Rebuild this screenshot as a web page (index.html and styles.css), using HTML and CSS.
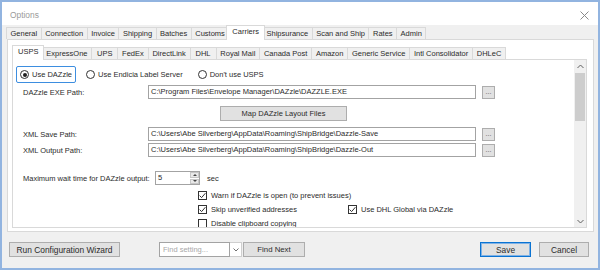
FILE: index.html
```html
<!DOCTYPE html>
<html lang="en">
<head>
  <meta charset="UTF-8" />
  <title>Options</title>
  <link rel="stylesheet" href="styles.css">
</head>
<body>
  <div class="window">
    <div class="titlebar">
      <span class="title">Options</span>
      <svg class="close" width="9" height="9" viewBox="0 0 9 9"><path d="M0.5 0.5L8.5 8.5M8.5 0.5L0.5 8.5" stroke="#8a8a8a" stroke-width="1" fill="none"/></svg>
    </div>

    <div class="tabstrip main-tabs">
      <span class="tab">General</span>
      <span class="tab">Connection</span>
      <span class="tab">Invoice</span>
      <span class="tab">Shipping</span>
      <span class="tab">Batches</span>
      <span class="tab">Customs</span>
      <span class="tab active">Carriers</span>
      <span class="tab">Shipsurance</span>
      <span class="tab">Scan and Ship</span>
      <span class="tab">Rates</span>
      <span class="tab">Admin</span>
    </div>

    <div class="page">
      <div class="tabstrip sub-tabs">
        <span class="tab active">USPS</span>
        <span class="tab">ExpressOne</span>
        <span class="tab">UPS</span>
        <span class="tab">FedEx</span>
        <span class="tab">DirectLink</span>
        <span class="tab">DHL</span>
        <span class="tab">Royal Mail</span>
        <span class="tab">Canada Post</span>
        <span class="tab">Amazon</span>
        <span class="tab">Generic Service</span>
        <span class="tab">Intl Consolidator</span>
        <span class="tab">DHLeC</span>
      </div>

      <div class="subpage">
        <div class="content">
          <div class="radio-row">
            <span class="opt focused"><span class="radio on"></span>Use DAZzle</span>
            <span class="opt"><span class="radio"></span>Use Endicia Label Server</span>
            <span class="opt"><span class="radio"></span>Don't use USPS</span>
          </div>

          <div class="path-row exe-row">
            <span class="lbl">DAZzle EXE Path:</span>
            <span class="field">C:\Program Files\Envelope Manager\DAZzle\DAZZLE.EXE</span>
            <span class="btn dots">...</span>
          </div>

          <div class="map-row">
            <span class="btn map">Map DAZzle Layout Files</span>
          </div>

          <div class="path-row save-row">
            <span class="lbl">XML Save Path:</span>
            <span class="field">C:\Users\Abe Silverberg\AppData\Roaming\ShipBridge\Dazzle-Save</span>
            <span class="btn dots">...</span>
          </div>

          <div class="path-row out-row">
            <span class="lbl">XML Output Path:</span>
            <span class="field">C:\Users\Abe Silverberg\AppData\Roaming\ShipBridge\Dazzle-Out</span>
            <span class="btn dots">...</span>
          </div>

          <div class="wait-row">
            <span class="lbl">Maximum wait time for DAZzle output:</span>
            <span class="spinner">
              <span class="spin-value">5</span>
              <span class="spin-btns">
                <span class="spin-up"></span>
                <span class="spin-down"></span>
              </span>
            </span>
            <span class="unit">sec</span>
          </div>

          <div class="checks">
            <span class="chk"><span class="box on"><svg width="7" height="7" viewBox="0 0 7 7"><path d="M0.6 3.6L2.6 5.6L6.4 1.2" stroke="#333" stroke-width="1" fill="none"/></svg></span>Warn if DAZzle is open (to prevent issues)</span>
            <span></span>
            <span class="chk"><span class="box on"><svg width="7" height="7" viewBox="0 0 7 7"><path d="M0.6 3.6L2.6 5.6L6.4 1.2" stroke="#333" stroke-width="1" fill="none"/></svg></span>Skip unverified addresses</span>
            <span class="chk"><span class="box on"><svg width="7" height="7" viewBox="0 0 7 7"><path d="M0.6 3.6L2.6 5.6L6.4 1.2" stroke="#333" stroke-width="1" fill="none"/></svg></span>Use DHL Global via DAZzle</span>
            <span class="chk last"><span class="box"></span>Disable clipboard copying</span>
          </div>
        </div>

        <div class="scrollbar">
          <span class="arrow"><svg width="7" height="5" viewBox="0 0 7 5"><path d="M0.5 4L3.5 1L6.5 4" stroke="#606060" stroke-width="1" fill="none"/></svg></span>
          <span class="thumb"></span>
          <span class="track"></span>
          <span class="arrow"><svg width="7" height="5" viewBox="0 0 7 5"><path d="M0.5 1L3.5 4L6.5 1" stroke="#606060" stroke-width="1" fill="none"/></svg></span>
        </div>
      </div>
    </div>

    <div class="footer">
      <span class="btn big wizard">Run Configuration Wizard</span>
      <span class="combo">
        <span class="combo-text">Find setting...</span>
        <span class="combo-drop"><svg width="6" height="4" viewBox="0 0 6 4"><path d="M0.5 0.5L3 3L5.5 0.5" stroke="#707070" stroke-width="1" fill="none"/></svg></span>
      </span>
      <span class="btn find">Find Next</span>
      <span class="spacer"></span>
      <span class="btn big save">Save</span>
      <span class="btn big cancel">Cancel</span>
    </div>
  </div>
</body>
</html>
```

FILE: styles.css
```css
:root {
  --window-border: #92b4e0;
  --dialog-bg: #f0f0f0;
  --tab-border: #d9d9d9;
  --field-border: #a3a3a3;
  --button-bg: #e1e1e1;
  --button-border: #adadad;
  --text-color: #2b2b2b;
  --font-family: 'Liberation Sans', Arial, sans-serif;
}

* {
  box-sizing: border-box;
  margin: 0;
  padding: 0;
}

html, body {
  width: 600px;
  height: 270px;
  overflow: hidden;
  background: #fff;
  font-family: var(--font-family);
  font-size: 7.5px;
  color: var(--text-color);
}

.window {
  width: 600px;
  height: 270px;
  border: 2px solid var(--window-border);
  background: var(--dialog-bg);
  display: flex;
  flex-direction: column;
}

/* Title bar */
.titlebar {
  flex: none;
  height: 23px;
  background: #fff;
  display: flex;
  align-items: center;
  justify-content: space-between;
  padding: 3px 9px 0 8px;
}

.title {
  font-size: 8.4px;
  color: #9a9a9a;
}

/* Tabs */
.tabstrip {
  flex: none;
  display: flex;
  align-items: flex-end;
  height: 14px;
  white-space: nowrap;
}

.main-tabs {
  padding-left: 5px;
}

.sub-tabs {
  padding-left: 3px;
}

.tab {
  height: 12px;
  line-height: 11px;
  padding: 0 3.5px;
  border: 1px solid var(--tab-border);
  border-bottom: none;
  margin-left: -1px;
  background: var(--dialog-bg);
}

.sub-tabs .tab {
  min-width: 27px;
  padding: 0 3.8px;
  text-align: center;
}

.tab.active {
  position: relative;
  z-index: 1;
  height: 15px;
  line-height: 12px;
  margin: 0 -2px -1px -3px;
  padding: 0 5px;
  background: #fff;
}

.sub-tabs .tab.active {
  padding: 0 5px;
}

.page {
  flex: none;
  width: 587px;
  height: 193px;
  margin-left: 5px;
  padding: 5px 0 0 4px;
  background: #fff;
  border: 1px solid var(--tab-border);
}

.subpage {
  width: 575px;
  height: 169px;
  border: 1px solid var(--tab-border);
  background: #fff;
  display: flex;
}

.content {
  flex: 1;
  overflow: hidden;
  white-space: nowrap;
}

/* Radio row */
.radio-row {
  display: flex;
  align-items: center;
  height: 17px;
  margin: 6px 0 0 3px;
}

.opt {
  display: flex;
  align-items: center;
  gap: 3px;
  height: 17px;
  margin-left: 10px;
}

.opt.focused {
  margin-left: 0;
  padding: 0 3px 0 3px;
  border: 1px solid #3d8ee0;
  border-radius: 2px;
}

.opt:last-child {
  margin-left: 15px;
}

.radio {
  position: relative;
  width: 9px;
  height: 9px;
  border: 1px solid #333;
  border-radius: 50%;
  background: #fff;
}

.radio.on::after {
  content: '';
  position: absolute;
  left: 1.5px;
  top: 1.5px;
  width: 4px;
  height: 4px;
  border-radius: 50%;
  background: #222;
}

/* Path rows */
.path-row {
  display: grid;
  grid-template-columns: 119px 328px 13px;
  column-gap: 6px;
  align-items: center;
  margin-left: 10px;
  height: 14px;
}

.exe-row { margin-top: 2px; }
.save-row { margin-top: 6px; }
.out-row { margin-top: 2px; }

.field {
  height: 14px;
  line-height: 12px;
  padding-left: 2px;
  border: 1px solid var(--field-border);
  background: #fff;
  overflow: hidden;
}

.btn {
  display: flex;
  align-items: center;
  justify-content: center;
  background: var(--button-bg);
  border: 1px solid var(--button-border);
  white-space: nowrap;
}

.dots {
  height: 13px;
  font-size: 7px;
  color: #555;
  padding-bottom: 2px;
}

.map-row {
  margin: 7px 0 0 207px;
}

.map {
  width: 127px;
  height: 15px;
}

/* Wait time */
.wait-row {
  display: flex;
  align-items: center;
  margin: 14px 0 0 10px;
  height: 14px;
}

.wait-row .lbl {
  width: 132px;
}

.spinner {
  display: flex;
  width: 45px;
  height: 14px;
  border: 1px solid var(--field-border);
  background: #fff;
}

.spin-value {
  flex: 1;
  padding-left: 2px;
  line-height: 12px;
}

.spin-btns {
  width: 10px;
  display: flex;
  flex-direction: column;
  gap: 1px;
  padding: 0 0 0 1px;
}

.spin-up, .spin-down {
  flex: 1;
  background: #e8e8e8;
  border: 1px solid #c6c6c6;
  display: flex;
  align-items: center;
  justify-content: center;
}

.spin-up::after {
  content: '';
  border: 2px solid transparent;
  border-top: none;
  border-bottom: 2px solid #444;
}

.spin-down::after {
  content: '';
  border: 2px solid transparent;
  border-bottom: none;
  border-top: 2px solid #444;
}

.unit {
  margin-left: 7px;
}

/* Checkboxes */
.checks {
  display: grid;
  grid-template-columns: 150px auto;
  grid-auto-rows: 14px;
  margin: 3px 0 0 185px;
}

.chk {
  display: flex;
  align-items: center;
  gap: 4px;
}

.chk.last {
  margin-top: 1px;
}

.box {
  width: 9px;
  height: 9px;
  border: 1px solid #333;
  background: #fff;
  display: flex;
  align-items: center;
  justify-content: center;
}

/* Scrollbar */
.scrollbar {
  width: 12px;
  background: #f0f0f0;
  display: flex;
  flex-direction: column;
  align-items: center;
}

.arrow {
  height: 12px;
  display: flex;
  align-items: center;
  justify-content: center;
}

.thumb {
  width: 10px;
  height: 48px;
  margin-top: 1px;
  background: #cdcdcd;
}

.track {
  flex: 1;
}

/* Footer */
.footer {
  flex: 1;
  display: flex;
  align-items: flex-start;
  padding: 10px 9px 0 7px;
}

.big {
  font-size: 8.4px;
  height: 15px;
}

.wizard {
  width: 111px;
}

.combo {
  display: flex;
  height: 15px;
  margin-left: 39px;
}

.combo-text {
  width: 71px;
  border: 1px solid var(--field-border);
  background: #fff;
  color: #a8a8a8;
  padding-left: 3px;
  line-height: 13px;
}

.combo-drop {
  width: 12px;
  border: 1px solid #cfcfcf;
  border-left: none;
  background: #fff;
  display: flex;
  align-items: center;
  justify-content: center;
}

.find {
  width: 62px;
  height: 15px;
  margin-left: 1px;
  font-size: 7.8px;
}

.spacer {
  flex: 1;
}

.save {
  width: 51px;
  border-color: #0a73d2;
  box-shadow: inset 0 0 0 1px #7fb2e6;
}

.cancel {
  width: 50px;
  margin-left: 8px;
}
```
